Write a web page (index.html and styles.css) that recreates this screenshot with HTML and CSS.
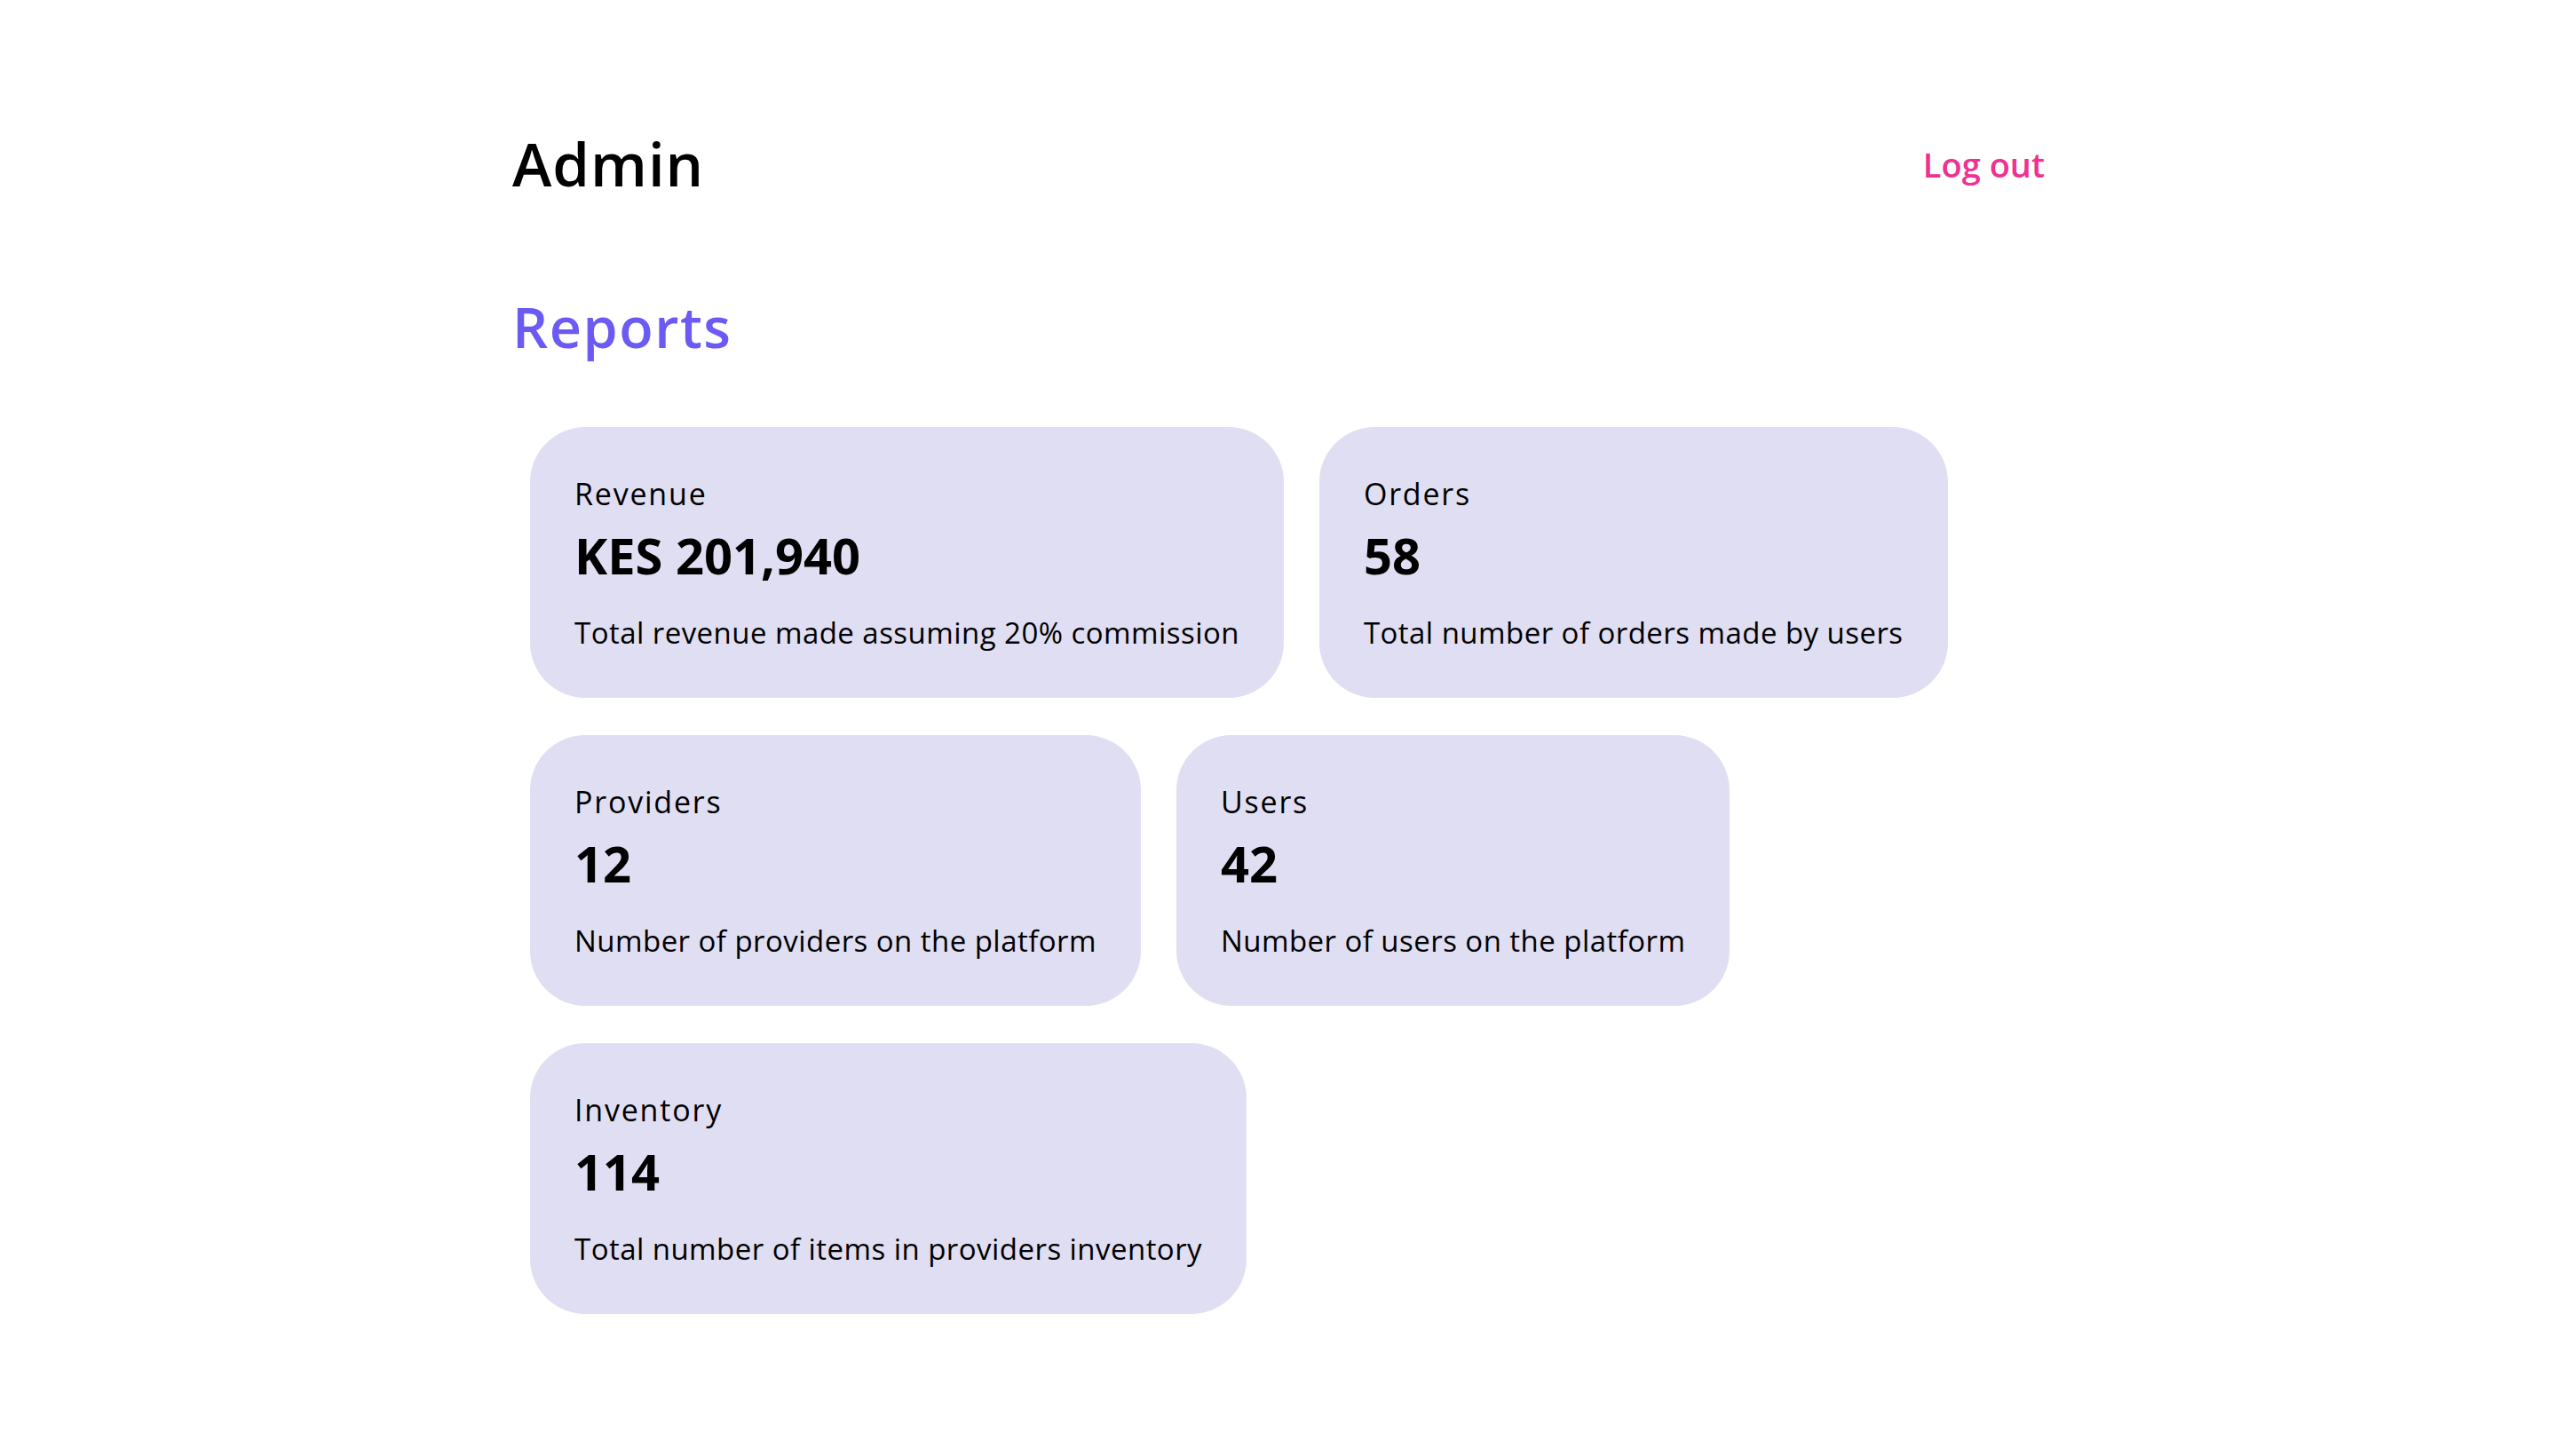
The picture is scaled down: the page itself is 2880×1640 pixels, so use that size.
FILE: index.html
```html
<!DOCTYPE html>
<html lang="en">
<head>
<meta charset="utf-8">
<title>Admin - Reports</title>
<link rel="stylesheet" href="styles.css">
</head>
<body>
<div class="page">
  <header class="header">
    <h1 class="brand">Admin</h1>
    <a class="logout" href="#">Log out</a>
  </header>
  <h2 class="section-title">Reports</h2>
  <div class="cards">
    <div class="card">
      <div class="card-title">Revenue</div>
      <div class="card-value">KES 201,940</div>
      <div class="card-desc">Total revenue made assuming 20% commission</div>
    </div>
    <div class="card">
      <div class="card-title">Orders</div>
      <div class="card-value">58</div>
      <div class="card-desc">Total number of orders made by users</div>
    </div>
    <div class="card">
      <div class="card-title">Providers</div>
      <div class="card-value">12</div>
      <div class="card-desc">Number of providers on the platform</div>
    </div>
    <div class="card">
      <div class="card-title">Users</div>
      <div class="card-value">42</div>
      <div class="card-desc">Number of users on the platform</div>
    </div>
    <div class="card">
      <div class="card-title">Inventory</div>
      <div class="card-value">114</div>
      <div class="card-desc">Total number of items in providers inventory</div>
    </div>
  </div>
</div>
</body>
</html>
```
FILE: styles.css
```css
html, body {
  margin: 0;
  padding: 0;
  background: #ffffff;
}
body {
  font-family: "Open Sans", "Noto Sans", sans-serif;
  color: #000000;
}
.page {
  width: 1726px;
  margin: 0 auto;
  padding-top: 151px;
}
.header {
  display: flex;
  justify-content: space-between;
  align-items: center;
}
.brand {
  margin: 0;
  font-size: 67px;
  line-height: 67px;
  font-weight: 600;
  letter-spacing: 1px;
}
.logout {
  font-size: 38px;
  line-height: 38px;
  font-weight: 600;
  color: #ee3192;
  text-decoration: none;
}
.section-title {
  margin: 118px 0 0 0;
  font-size: 63px;
  line-height: 63px;
  font-weight: 600;
  color: #6c5bf3;
  letter-spacing: 1.5px;
}
.cards {
  display: flex;
  flex-wrap: wrap;
  align-items: flex-start;
  gap: 42px 40px;
  padding: 0 20px;
  margin-top: 82px;
}
.card {
  background: #e0def2;
  border-radius: 62px;
  padding: 58px 50px 57px 50px;
}
.card-title {
  font-size: 34px;
  line-height: 34px;
  font-weight: 400;
  letter-spacing: 1.8px;
}
.card-value {
  margin-top: 24px;
  font-size: 56px;
  line-height: 56px;
  font-weight: 700;
}
.card-desc {
  margin-top: 43px;
  font-size: 33px;
  line-height: 33px;
  font-weight: 400;
  letter-spacing: 0.45px;
  white-space: nowrap;
}
```
